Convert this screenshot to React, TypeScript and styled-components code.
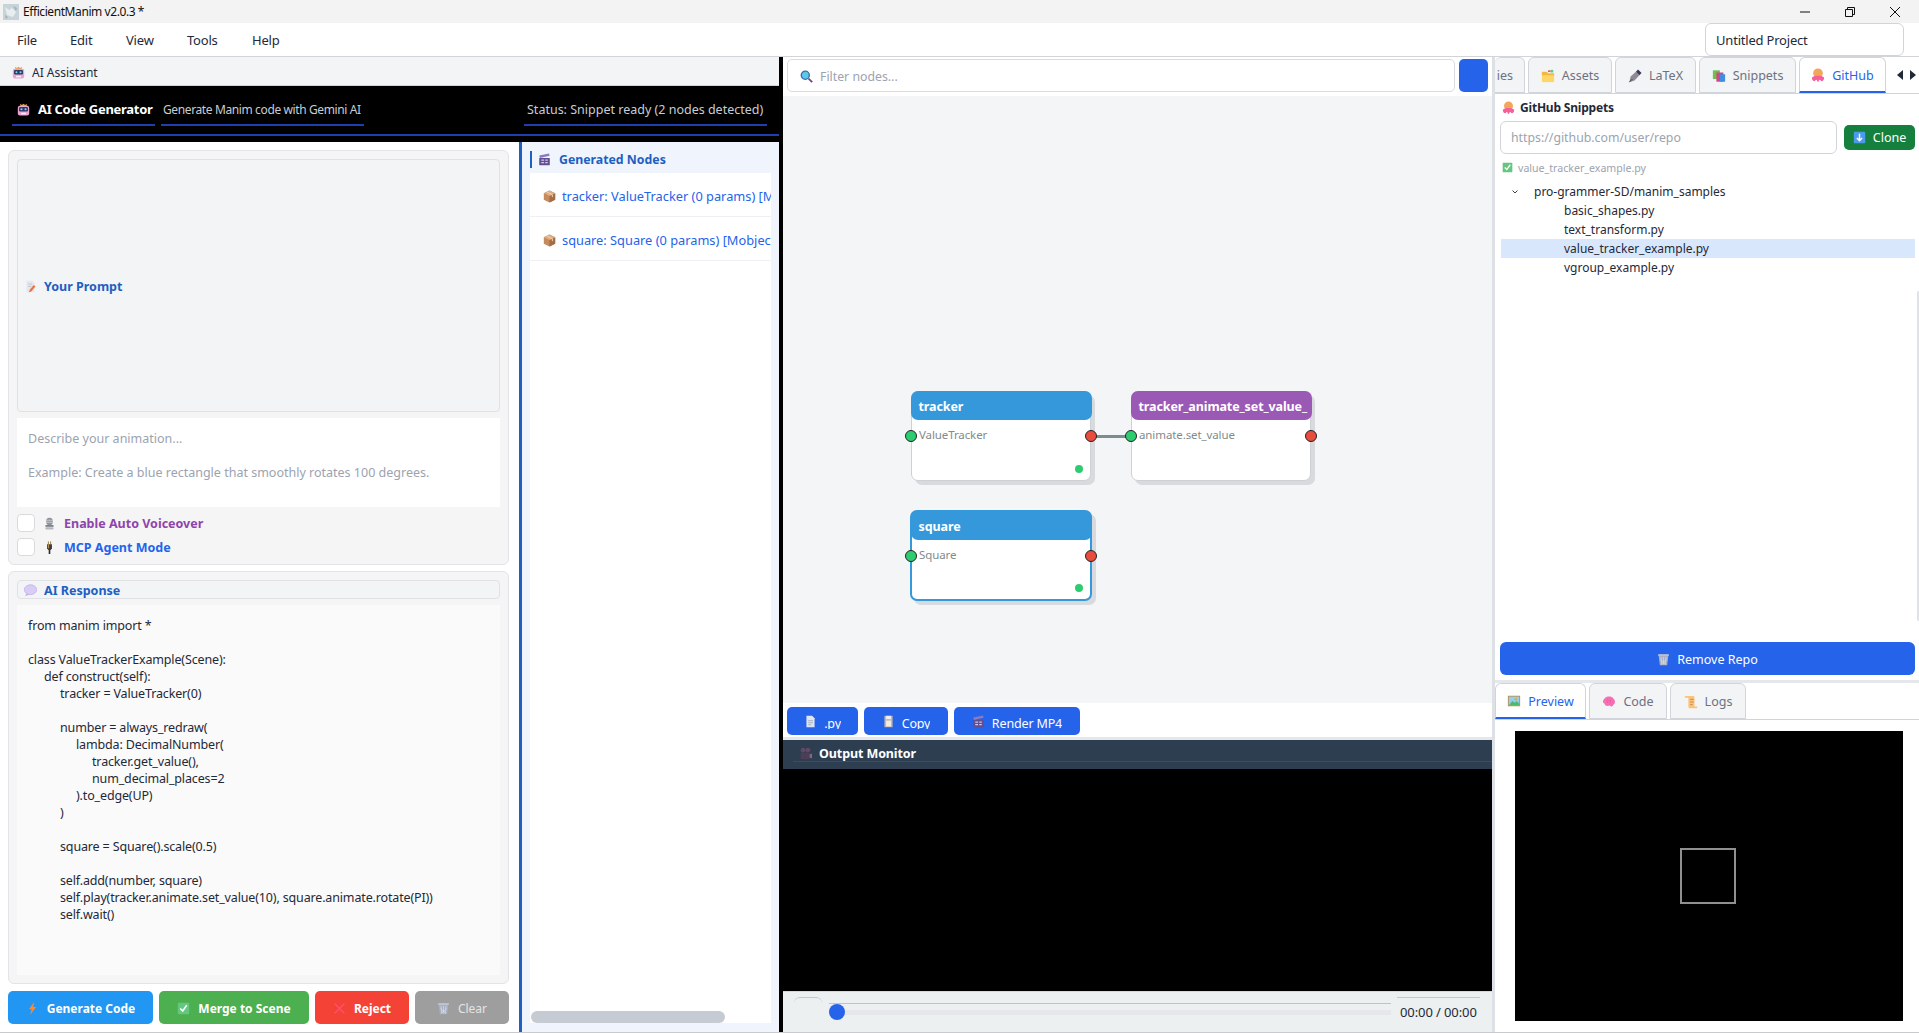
import React from "react";
import styled, { createGlobalStyle } from "styled-components";

const Global = createGlobalStyle`
  html, body { margin: 0; padding: 0; background: #fff; }
  body { font-family: "Noto Sans", "Open Sans", sans-serif; font-size: 12px; color: #1f2937; overflow: hidden; }
  * { box-sizing: border-box; }
`;

const Window = styled.div`
  width: 1919px;
  height: 1033px;
  display: flex;
  flex-direction: column;
  overflow: hidden;
  background: #fff;
  border-bottom: 1px solid #c8cacd;
`;

/* title + menu */
const TitleBar = styled.div`
  height: 23px;
  background: #f3f3f3;
  display: flex;
  align-items: center;
  padding-left: 3px;
  flex: none;
`;
const TitleText = styled.span`
  margin-left: 4px;
  font-size: 12px;
  letter-spacing: -0.42px;
  color: #111;
  flex: 1;
`;
const WinButtons = styled.div`
  display: flex;
  align-items: center;
  gap: 33px;
  padding-right: 18px;
`;
const MenuBar = styled.div`
  height: 34px;
  flex: none;
  display: flex;
  align-items: center;
  border-bottom: 1px solid #d1d5db;
  padding-left: 17px;
`;
const MenuItem = styled.span<{ $w: number }>`
  width: ${(p) => p.$w}px;
  font-size: 13px;
  letter-spacing: -0.2px;
  color: #1f2937;
`;
const ProjectInput = styled.div`
  margin-left: auto;
  margin-right: 15px;
  width: 199px;
  height: 33px;
  border: 1px solid #d1d5db;
  border-radius: 6px;
  display: flex;
  align-items: center;
  padding-left: 10px;
  font-size: 13px;
  letter-spacing: -0.2px;
`;

const Body = styled.div`
  flex: 1;
  display: flex;
  min-height: 0;
`;

/* left dock */
const LeftDock = styled.div`
  width: 779px;
  flex: none;
  display: flex;
  flex-direction: column;
`;
const DockTitle = styled.div`
  height: 29px;
  flex: none;
  background: #f3f4f6;
  border-bottom: 1px solid #d1d5db;
  display: flex;
  align-items: center;
  gap: 7px;
  padding: 2px 0 0 12px;
  font-size: 12px;
`;
const BlackHeader = styled.div`
  height: 56px;
  flex: none;
  background: #000;
  padding-bottom: 6px;
`;
const HeaderRow = styled.div`
  height: 50px;
  border-bottom: 2px solid #1e40af;
  padding: 8px 12px;
  display: flex;
  gap: 6px;
`;
const HeaderChip = styled.div<{ $push?: boolean; $bold?: boolean; $w: number }>`
  width: ${(p) => p.$w}px;
  height: 32px;
  border-bottom: 2px solid #1e40af;
  display: flex;
  align-items: center;
  gap: 8px;
  padding-left: ${(p) => (p.$bold ? 5 : 2)}px;
  margin-left: ${(p) => (p.$push ? "auto" : 0)};
  color: ${(p) => (p.$bold ? "#fff" : "#c9cdd3")};
  font-weight: ${(p) => (p.$bold ? 700 : 400)};
  font-size: ${(p) => (p.$bold ? 13 : 12)}px;
  letter-spacing: ${(p) => (p.$bold ? -0.3 : -0.38)}px;
  white-space: nowrap;
`;
const StatusChip = styled(HeaderChip)`
  font-size: 12.5px;
  letter-spacing: 0;
  padding-left: 3px;
`;
const DockBody = styled.div`
  flex: 1;
  display: flex;
  min-height: 0;
`;
const PromptColumn = styled.div`
  width: 519px;
  flex: none;
  padding: 8px 10px 9px 8px;
  display: flex;
  flex-direction: column;
`;
const Group = styled.div<{ $h: number; $mb: number }>`
  height: ${(p) => p.$h}px;
  margin-bottom: ${(p) => p.$mb}px;
  flex: none;
  background: #f5f5f5;
  border: 1px solid #e2e4e8;
  border-radius: 6px;
  padding: 8px;
  display: flex;
  flex-direction: column;
`;
const PromptLabel = styled.div`
  height: 253px;
  flex: none;
  background: #f3f4f6;
  border: 1px solid #dfe1e5;
  border-radius: 4px;
  display: flex;
  align-items: center;
  gap: 7px;
  padding: 1px 0 0 6px;
  color: #1d5fc2;
  font-weight: 700;
  font-size: 12.5px;
`;
const PromptArea = styled.div`
  height: 89px;
  flex: none;
  margin: 6px 0 1px;
  background: #fff;
  padding: 12px 11px;
  color: #9ca3af;
  font-size: 12.5px;
  line-height: 17px;
`;
const PromptGap = styled.div`
  height: 17px;
`;
const CheckRow = styled.div<{ $color: string }>`
  display: flex;
  align-items: center;
  height: 18px;
  margin-top: 6px;
  color: ${(p) => p.$color};
  font-weight: 700;
  font-size: 12.5px;
  gap: 8px;
`;
const CheckBox = styled.span`
  width: 18px;
  height: 18px;
  background: #fff;
  border: 1px solid #d8dade;
  border-radius: 4px;
  flex: none;
`;
const ResponseLabel = styled(PromptLabel)`
  height: 19px;
  padding-top: 1px;
`;
const CodeArea = styled.div`
  flex: 1;
  margin-top: 6px;
  background: #fafafa;
  padding: 12px 11px;
  font-size: 12.5px;
  letter-spacing: -0.15px;
  line-height: 17px;
  color: #1f2937;
  white-space: pre;
`;
const CodeLine = styled.div<{ $indent: number }>`
  height: 17px;
  padding-left: ${(p) => p.$indent * 16}px;
`;
const ButtonRow = styled.div`
  display: flex;
  gap: 6px;
  height: 33px;
  flex: none;
`;
const ActionButton = styled.div<{ $bg: string; $w: number; $plain?: boolean }>`
  width: ${(p) => p.$w}px;
  background: ${(p) => p.$bg};
  border-radius: 5px;
  color: ${(p) => (p.$plain ? "#e4e4e4" : "#fff")};
  font-weight: ${(p) => (p.$plain ? 400 : 700)};
  font-size: 12px;
  padding-top: 1px;
  display: flex;
  align-items: center;
  justify-content: center;
  gap: 8px;
`;

const NodesColumn = styled.div`
  flex: 1;
  min-width: 0;
  background: #eff4fd;
  border-left: 3px solid #1d5fc2;
  padding: 0 8px 9px;
  display: flex;
  flex-direction: column;
`;
const NodesTitle = styled.div`
  height: 31px;
  flex: none;
  display: flex;
  align-items: center;
  color: #1d5fc2;
  font-weight: 700;
  font-size: 12.3px;
  padding-top: 3px;
`;
const NodesBar = styled.span`
  width: 2px;
  height: 17px;
  background: #1d5fc2;
  margin-right: 6px;
`;
const NodesTitleText = styled.span`
  margin-left: 8px;
`;
const NodesList = styled.div`
  flex: 1;
  background: #fff;
  display: flex;
  flex-direction: column;
  min-height: 0;
  overflow: hidden;
`;
const NodeRow = styled.div`
  height: 44px;
  flex: none;
  display: flex;
  align-items: center;
  border-bottom: 1px solid #eef0f3;
  padding: 3px 0 0 13px;
  gap: 6px;
  color: #2563eb;
  font-size: 12.8px;
  white-space: nowrap;
  overflow: hidden;
`;
const HScroll = styled.div`
  margin-top: auto;
  margin-left: 1px;
  width: 194px;
  height: 12px;
  flex: none;
  border-radius: 6px;
  background: #c6cbd3;
`;

const VDivider = styled.div`
  width: 4px;
  flex: none;
  background: #000;
`;

/* centre */
const CenterColumn = styled.div`
  width: 709px;
  flex: none;
  display: flex;
  flex-direction: column;
`;
const FilterRow = styled.div`
  height: 39px;
  flex: none;
  display: flex;
  padding: 2px 4px 4px;
  gap: 4px;
`;
const FilterInput = styled.div`
  width: 668px;
  border: 1px solid #d9dbe1;
  border-radius: 5px;
  display: flex;
  align-items: center;
  gap: 7px;
  padding: 1px 0 0 12px;
  color: #9ca3af;
  font-size: 12.3px;
`;
const FilterButton = styled.div`
  width: 29px;
  background: #2563eb;
  border-radius: 5px;
`;
const Canvas = styled.div`
  height: 607px;
  flex: none;
  background: #f4f5f7;
  position: relative;
`;
const GraphNode = styled.div<{ $x: number; $y: number; $sel?: boolean }>`
  position: absolute;
  left: ${(p) => p.$x}px;
  top: ${(p) => p.$y}px;
  width: ${(p) => (p.$sel ? 182 : 180)}px;
  height: ${(p) => (p.$sel ? 91 : 90)}px;
  background: #fff;
  border: ${(p) => (p.$sel ? "2px solid #3498db" : "1.5px solid #cdd1d6")};
  border-radius: 7px;
  box-shadow: 4px 4px 0 #d9dadd;
`;
const NodeHead = styled.div<{ $bg: string }>`
  margin: -1.5px -1.5px 0;
  height: 29px;
  background: ${(p) => p.$bg};
  border-radius: 7px;
  color: #fff;
  font-weight: 700;
  font-size: 12.5px;
  letter-spacing: -0.1px;
  display: flex;
  align-items: center;
  padding: 2px 0 0 8px;
  white-space: nowrap;
  overflow: hidden;
`;
const NodeSub = styled.div`
  margin: 7px 0 0 7px;
  color: #7f8c8d;
  font-size: 11.5px;
  letter-spacing: -0.1px;
  line-height: 16px;
`;
const Socket = styled.span<{ $side: "left" | "right"; $c: string }>`
  position: absolute;
  top: 38px;
  ${(p) => p.$side}: -7px;
  width: 12px;
  height: 12px;
  border-radius: 50%;
  background: ${(p) => p.$c};
  border: 1px solid #222;
`;
const StatusDot = styled.span`
  position: absolute;
  right: 7px;
  bottom: 7px;
  width: 8px;
  height: 8px;
  border-radius: 50%;
  background: #2ecc71;
`;
const Edge = styled.div`
  position: absolute;
  left: 308px;
  top: 339px;
  width: 40px;
  height: 3px;
  background: #7f8c8d;
`;
const CanvasActions = styled.div`
  height: 34px;
  flex: none;
  display: flex;
  gap: 6px;
  padding: 4px 4px 2px;
`;
const SmallBlue = styled.div<{ $w: number }>`
  width: ${(p) => p.$w}px;
  height: 28px;
  background: #2563eb;
  border-radius: 5px;
  color: #fff;
  font-size: 12.5px;
  letter-spacing: -0.15px;
  display: flex;
  align-items: center;
  justify-content: center;
  gap: 7px;
  overflow: hidden;
`;
const ClippedLabel = styled.span`
  height: 13px;
  line-height: 15px;
  overflow: hidden;
  margin-top: 2px;
`;
const Sep = styled.div<{ $h: number }>`
  height: ${(p) => p.$h}px;
  flex: none;
  background: #e5e7eb;
`;
const MonitorBar = styled.div`
  height: 29px;
  flex: none;
  background: #2c3e50;
  padding: 0 0 0 10px;
  display: flex;
  align-items: flex-start;
`;
const MonitorInner = styled.div`
  flex: 1;
  height: 22px;
  border-bottom: 1px solid #3b4d60;
  display: flex;
  align-items: center;
  gap: 7px;
  padding: 5px 0 0 6px;
  color: #fff;
  font-weight: 700;
  font-size: 12.5px;
  letter-spacing: -0.1px;
`;
const MonitorScreen = styled.div`
  height: 222px;
  flex: none;
  background: #000;
`;
const PlayerBar = styled.div`
  flex: 1;
  background: #ecf0f1;
  border-top: 1px solid #d5d8db;
  display: flex;
  align-items: flex-start;
  padding: 5px 12px 0 11px;
`;
const GhostButton = styled.div`
  width: 28px;
  height: 20px;
  border-top: 1px solid #c4c8cc;
  border-radius: 6px 6px 0 0;
  margin-right: 7px;
  flex: none;
`;
const SliderBox = styled.div`
  width: 562px;
  height: 26px;
  flex: none;
  margin-top: 6px;
  border-top: 1px solid #bfc4c9;
  position: relative;
`;
const SliderGroove = styled.div`
  margin-top: 6px;
  height: 5px;
  background: #e5e7eb;
`;
const SliderHandle = styled.span`
  position: absolute;
  left: 0;
  top: 0;
  width: 16px;
  height: 16px;
  border-radius: 50%;
  background: #2563eb;
`;
const TimeBox = styled.div`
  margin-left: 6px;
  flex: 1;
  border-top: 1px solid #c4c8cc;
  padding: 5px 0 0 3px;
  font-size: 13px;
  letter-spacing: -0.1px;
  color: #1f2937;
  white-space: nowrap;
`;

/* right */
const RightColumn = styled.div`
  flex: 1;
  min-width: 0;
  display: flex;
  flex-direction: column;
  border-left: 3px solid #dde0e5;
`;
const TabBar = styled.div`
  height: 37px;
  flex: none;
  display: flex;
  gap: 3px;
  border-bottom: 1px solid #d1d5db;
`;
const Tab = styled.div<{ $w: number; $on?: boolean }>`
  width: ${(p) => p.$w}px;
  height: 36px;
  flex: none;
  background: ${(p) => (p.$on ? "#fff" : "#f3f4f6")};
  border: 1px solid #d1d5db;
  border-bottom: ${(p) => (p.$on ? "2px solid #2563eb" : "1px solid #d1d5db")};
  border-radius: 6px 6px 0 0;
  color: ${(p) => (p.$on ? "#2563eb" : "#6b7280")};
  font-size: 12.5px;
  padding-top: 1px;
  display: flex;
  align-items: center;
  justify-content: center;
  gap: 7px;
`;
const CutTab = styled(Tab)`
  justify-content: flex-end;
  padding-right: 11px;
  border-left: none;
`;
const TabArrows = styled.div`
  display: flex;
  align-items: center;
  gap: 7px;
  margin-left: 8px;
`;
const SnippetsPanel = styled.div`
  height: 586px;
  flex: none;
  display: flex;
  flex-direction: column;
  padding: 0 4px 5px 5px;
  position: relative;
`;
const SnippetsTitle = styled.div`
  height: 27px;
  flex: none;
  display: flex;
  align-items: center;
  gap: 5px;
  padding-left: 2px;
  font-weight: 700;
  font-size: 12px;
  letter-spacing: -0.2px;
  color: #1f2937;
`;
const CloneRow = styled.div`
  display: flex;
  align-items: center;
  gap: 7px;
  height: 33px;
  flex: none;
`;
const UrlInput = styled.div`
  width: 337px;
  height: 33px;
  border: 1px solid #d1d5db;
  border-radius: 6px;
  display: flex;
  align-items: center;
  padding-left: 10px;
  color: #9ca3af;
  font-size: 12.3px;
`;
const CloneButton = styled.div`
  width: 71px;
  height: 25px;
  background: #15803d;
  border-radius: 5px;
  color: #fff;
  font-size: 12.5px;
  display: flex;
  align-items: center;
  justify-content: center;
  gap: 7px;
`;
const StatusLine = styled.div`
  height: 27px;
  flex: none;
  display: flex;
  align-items: center;
  gap: 5px;
  padding-left: 2px;
  color: #9ca3af;
  font-size: 10.6px;
`;
const Tree = styled.div`
  margin-top: 1px;
  flex: 1;
`;
const TreeRow = styled.div<{ $indent: number; $on?: boolean }>`
  height: 19px;
  display: flex;
  align-items: center;
  padding-left: ${(p) => p.$indent}px;
  background: ${(p) => (p.$on ? "#d9e7fd" : "transparent")};
  font-size: 12px;
  color: #1f2937;
  margin-left: 1px;
`;
const Caret = styled.span`
  width: 33px;
  flex: none;
  padding-left: 11px;
  display: flex;
`;
const RemoveButton = styled.div`
  height: 33px;
  flex: none;
  background: #2563eb;
  border-radius: 6px;
  color: #fff;
  font-size: 12.5px;
  padding-top: 1px;
  display: flex;
  align-items: center;
  justify-content: center;
  gap: 7px;
`;
const ScrollEdge = styled.div`
  position: absolute;
  right: 0;
  top: 197px;
  width: 2px;
  height: 330px;
  background: #dfe2e6;
  border-radius: 2px 0 0 2px;
`;
const PreviewWrap = styled.div`
  flex: 1;
  padding: 11px 16px 11px 20px;
  display: flex;
  min-height: 0;
`;
const PreviewScreen = styled.div`
  flex: 1;
  background: #000;
  display: flex;
  align-items: center;
  justify-content: center;
`;
const ManimSquare = styled.div`
  width: 56px;
  height: 56px;
  border: 2px solid #909090;
  margin-left: -3px;
`;

type IconKind =
  | "robot" | "memo" | "mic" | "plug" | "balloon" | "clapper" | "box" | "bolt" | "check" | "cross"
  | "trash" | "folder" | "pen" | "books" | "octopus" | "down" | "picture" | "brain" | "scroll"
  | "page" | "floppy" | "camera" | "search";

const shapes: Record<IconKind, React.ReactNode> = {
  robot: (
    <>
      <path d="M4 4V1l2 1.500L8 .8l2 1.700L12 1v3z" fill="#e9a23b" />
      <rect x="1" y="3.500" width="14" height="12" rx="2.500" fill="#eaa3cf" />
      <rect x="2.500" y="5" width="11" height="5.500" rx="1.500" fill="#2b3a67" />
      <circle cx="5.500" cy="7.700" r="1.300" fill="#7fd4f5" />
      <circle cx="10.500" cy="7.700" r="1.300" fill="#7fd4f5" />
      <rect x="5" y="12" width="6" height="2" fill="#f5f0f7" />
    </>
  ),
  memo: (
    <>
      <path d="M3 1h7l3 3v11H3z" fill="#e6e8ef" />
      <path d="M5 5h5M5 8h4" stroke="#b9bec8" />
      <path d="M6 15l1-3 5-6 2 2-5 6z" fill="#f0723c" />
    </>
  ),
  mic: (
    <>
      <rect x="4" y="1" width="8" height="9" rx="4" fill="#8d939c" />
      <path d="M4 4h8M4 6.500h8" stroke="#d5d8dc" />
      <rect x="3" y="10" width="10" height="2" fill="#6f747c" />
      <rect x="3" y="12.500" width="10" height="3" rx="1" fill="#b5b9bf" />
    </>
  ),
  plug: (
    <>
      <rect x="6" y="0.500" width="1.300" height="3.500" fill="#9a8a5a" />
      <rect x="8.700" y="0.500" width="1.300" height="3.500" fill="#9a8a5a" />
      <path d="M5 4h6v5l-1.500 2h-3L5 9z" fill="#3b3b44" />
      <path d="M6 4h1.500v5H6z" fill="#c58a3a" />
      <rect x="7" y="11" width="2" height="5" fill="#2c2c34" />
    </>
  ),
  balloon: (
    <>
      <ellipse cx="8" cy="7" rx="7.500" ry="6" fill="#d9cdf5" stroke="#c0b0ec" />
      <path d="M3 11l-1.500 4L7 13z" fill="#c6b6ee" />
    </>
  ),
  clapper: (
    <>
      <rect x="1.500" y="6" width="13" height="9" rx=".5" fill="#5f4f92" />
      <path d="M1.500 3l12-2.500.8 3-12 2.500z" fill="#8a7abf" />
      <path d="M4 8h3.500v1.500H4zM9 8h3v1.500H9zM4 11h3.500v1.500H4zM9 11h3v1.500H9z" fill="#cfc8e6" />
    </>
  ),
  box: (
    <>
      <path d="M8 .5l7 3.500v8l-7 3.500L1 12V4z" fill="#c58a5e" />
      <path d="M8 7.500L15 4v8l-7 3.500z" fill="#a36d45" />
      <path d="M1 4l7 3.500L15 4 8 .5z" fill="#dfab7f" />
      <path d="M4.500 2.300l7 3.500v3" stroke="#ecd6bc" strokeWidth="1.200" fill="none" />
    </>
  ),
  bolt: <path d="M10 0L3.500 9H7l-2 7 7.500-10H9z" fill="#f68a3c" />,
  check: (
    <>
      <rect x="1" y="1" width="14" height="14" rx="1" fill="#63c77f" />
      <path d="M4 8l3 3 5-7" stroke="#fff" strokeWidth="2" fill="none" />
    </>
  ),
  cross: <path d="M2 2l12 12M14 2L2 14" stroke="#ff4f86" strokeWidth="1.600" />,
  trash: (
    <>
      <path d="M2 3h12l-1.500 12h-9z" fill="#a9b0c4" />
      <rect x="1.500" y="1.500" width="13" height="2" fill="#c5cada" />
      <path d="M5 5l1 9M8 5v9M11 5l-1 9M4 8l7 6M12 8l-7 6" stroke="#e1e4ec" strokeWidth=".7" />
    </>
  ),
  folder: (
    <>
      <path d="M1 5h14v10H1z" fill="#fcd667" />
      <path d="M1 3h6l1 2h7v2H1z" fill="#f3b73f" />
      <rect x="8" y="1.500" width="3" height="2" fill="#e8604c" />
      <rect x="11" y="1" width="3" height="3" fill="#5cc98d" />
    </>
  ),
  pen: (
    <>
      <path d="M1.500 15l1.500-6.500L9 3l4 4-5.500 6z" fill="#8d8a93" />
      <path d="M9 3l2.500-2.500 4 4L13 7z" fill="#3a3b58" />
      <path d="M1.500 15l3.500-3.500" stroke="#3a3b58" />
    </>
  ),
  books: (
    <>
      <rect x="1" y="1.500" width="8" height="10" fill="#6cc24a" />
      <rect x="5" y="4" width="8" height="10.500" fill="#d3458a" />
      <rect x="9" y="6" width="6" height="8.500" fill="#3f8fe0" />
    </>
  ),
  octopus: (
    <>
      <circle cx="8" cy="6" r="5.500" fill="#f2a65a" />
      <path d="M1 11c2-3 12-3 14 0 0 2.500-1.500 4-3 4-1 0-1-1.500-2-1.500S9 16 8 16s-1-2.500-2-2.500S5 15 4 15c-1.500 0-3-1.500-3-4z" fill="#f65f9a" />
    </>
  ),
  down: (
    <>
      <rect x="1" y="1" width="14" height="14" rx="1" fill="#4a9bec" />
      <path d="M8 3.500v8M4.800 8.500L8 12l3.200-3.500" stroke="#fff" strokeWidth="1.800" fill="none" />
    </>
  ),
  picture: (
    <>
      <rect x="1" y="2" width="14" height="12" fill="#c28a52" />
      <rect x="2" y="3" width="12" height="10" fill="#8fd2ec" />
      <path d="M2 13l4-5 3 2 2-2 3 3v2z" fill="#4fb86a" />
      <circle cx="10" cy="6" r="1.500" fill="#f8a03a" />
    </>
  ),
  brain: (
    <>
      <path d="M3 4c2-3 8-3 10 0 2.500 2 2.500 6 0 7-1 2.500-3 2.500-4 1-2 1-6 .5-6-2-2.500-1-2.500-4 0-6z" fill="#f56fb2" />
      <path d="M6 5c1 1 1 3 0 4M10 5c-1 1-1 3 0 4" stroke="#e35aa0" fill="none" />
    </>
  ),
  scroll: (
    <>
      <path d="M1 1h10l1 1v11h3v2H6l-1-1V3H1z" fill="#fbc27a" />
      <path d="M7 5h4M7 8h4M7 11h3" stroke="#c8854a" />
    </>
  ),
  page: (
    <>
      <path d="M3 1h7l3 3v11H3z" fill="#dfe5f0" />
      <path d="M5 7h6M5 9.500h6M5 12h4" stroke="#9fa9bc" />
    </>
  ),
  floppy: (
    <>
      <rect x="3" y="1" width="10" height="14" fill="#c8b9a8" />
      <rect x="5" y="1" width="6" height="4" fill="#eee" />
      <rect x="5" y="7" width="6" height="7" fill="#f2ece4" />
    </>
  ),
  camera: (
    <>
      <circle cx="5" cy="4" r="3" fill="#5e4a66" />
      <circle cx="11" cy="4" r="3" fill="#5e4a66" />
      <rect x="2" y="7" width="11" height="8" fill="#4d3d55" />
      <path d="M13 9l3-1v6l-3-1z" fill="#7e6a86" />
    </>
  ),
  search: (
    <>
      <circle cx="6.500" cy="6.500" r="5" fill="#5cc8ea" stroke="#3c6aa0" strokeWidth="1.600" />
      <path d="M10.500 10.500l4.500 4.500" stroke="#7a3f8f" strokeWidth="2.200" />
    </>
  ),
};

const IconSvg = styled.svg`
  flex: none;
  display: block;
`;

const Icon = ({ kind, size = 13 }: { kind: IconKind; size?: number }) => (
  <IconSvg width={size} height={size} viewBox="0 0 16 16">
    {shapes[kind]}
  </IconSvg>
);

const code: [number, string][] = [
  [0, "from manim import *"],
  [0, ""],
  [0, "class ValueTrackerExample(Scene):"],
  [1, "def construct(self):"],
  [2, "tracker = ValueTracker(0)"],
  [0, ""],
  [2, "number = always_redraw("],
  [3, "lambda: DecimalNumber("],
  [4, "tracker.get_value(),"],
  [4, "num_decimal_places=2"],
  [3, ").to_edge(UP)"],
  [2, ")"],
  [0, ""],
  [2, "square = Square().scale(0.5)"],
  [0, ""],
  [2, "self.add(number, square)"],
  [2, "self.play(tracker.animate.set_value(10), square.animate.rotate(PI))"],
  [2, "self.wait()"],
];

const menus: [string, number][] = [
  ["File", 53],
  ["Edit", 56],
  ["View", 61],
  ["Tools", 65],
  ["Help", 50],
];

const App = () => (
  <Window>
    <Global />
    <TitleBar>
      <svg width="16" height="16" viewBox="0 0 16 16">
        <rect width="16" height="16" fill="#c7d3d8" />
        <path d="M2 3l4 3 3-2 4 4-3 5-6-2z" fill="#e8eef0" />
        <path d="M10 2l4 2-1 3zM2 11l3 2-2 2z" fill="#9fb2ba" />
      </svg>
      <TitleText>EfficientManim v2.0.3 *</TitleText>
      <WinButtons>
        <svg width="12" height="12" viewBox="0 0 12 12">
          <path d="M1 6h10" stroke="#111" />
        </svg>
        <svg width="12" height="12" viewBox="0 0 12 12">
          <path d="M1.500 3.500h7v7h-7zM3.500 3.500v-2h7v7h-2" stroke="#111" fill="none" />
        </svg>
        <svg width="12" height="12" viewBox="0 0 12 12">
          <path d="M1 1l10 10M11 1L1 11" stroke="#111" />
        </svg>
      </WinButtons>
    </TitleBar>
    <MenuBar>
      {menus.map(([m, w]) => (
        <MenuItem key={m} $w={w}>
          {m}
        </MenuItem>
      ))}
      <ProjectInput>Untitled Project</ProjectInput>
    </MenuBar>
    <Body>
      <LeftDock>
        <DockTitle>
          <Icon kind="robot" />
          AI Assistant
        </DockTitle>
        <BlackHeader>
          <HeaderRow>
            <HeaderChip $bold $w={143}>
              <Icon kind="robot" />
              AI Code Generator
            </HeaderChip>
            <HeaderChip $w={203}>Generate Manim code with Gemini AI</HeaderChip>
            <StatusChip $push $w={243}>Status: Snippet ready (2 nodes detected)</StatusChip>
          </HeaderRow>
        </BlackHeader>
        <DockBody>
          <PromptColumn>
            <Group $h={415} $mb={6}>
              <PromptLabel>
                <Icon kind="memo" />
                Your Prompt
              </PromptLabel>
              <PromptArea>
                Describe your animation...
                <PromptGap />
                Example: Create a blue rectangle that smoothly rotates 100 degrees.
              </PromptArea>
              <CheckRow $color="#8e44ad">
                <CheckBox />
                <Icon kind="mic" />
                Enable Auto Voiceover
              </CheckRow>
              <CheckRow $color="#2563eb">
                <CheckBox />
                <Icon kind="plug" />
                MCP Agent Mode
              </CheckRow>
            </Group>
            <Group $h={413} $mb={7}>
              <ResponseLabel>
                <Icon kind="balloon" />
                AI Response
              </ResponseLabel>
              <CodeArea>
                {code.map(([indent, text], i) => (
                  <CodeLine key={i} $indent={indent}>
                    {text}
                  </CodeLine>
                ))}
              </CodeArea>
            </Group>
            <ButtonRow>
              <ActionButton $bg="#2196f3" $w={145}>
                <Icon kind="bolt" />
                Generate Code
              </ActionButton>
              <ActionButton $bg="#4caf50" $w={150}>
                <Icon kind="check" />
                Merge to Scene
              </ActionButton>
              <ActionButton $bg="#f44336" $w={94}>
                <Icon kind="cross" />
                Reject
              </ActionButton>
              <ActionButton $bg="#9e9e9e" $w={94} $plain>
                <Icon kind="trash" />
                Clear
              </ActionButton>
            </ButtonRow>
          </PromptColumn>
          <NodesColumn>
            <NodesTitle>
              <NodesBar />
              <Icon kind="clapper" />
              <NodesTitleText>Generated Nodes</NodesTitleText>
            </NodesTitle>
            <NodesList>
              <NodeRow>
                <Icon kind="box" />
                tracker: ValueTracker (0 params) [Mobject]
              </NodeRow>
              <NodeRow>
                <Icon kind="box" />
                square: Square (0 params) [Mobject]
              </NodeRow>
              <HScroll />
            </NodesList>
          </NodesColumn>
        </DockBody>
      </LeftDock>
      <VDivider />
      <CenterColumn>
        <FilterRow>
          <FilterInput>
            <Icon kind="search" />
            Filter nodes...
          </FilterInput>
          <FilterButton />
        </FilterRow>
        <Canvas>
          <Edge />
          <GraphNode $x={128} $y={295}>
            <NodeHead $bg="#3498db">tracker</NodeHead>
            <NodeSub>ValueTracker</NodeSub>
            <Socket $side="left" $c="#2ecc71" />
            <Socket $side="right" $c="#e74c3c" />
            <StatusDot />
          </GraphNode>
          <GraphNode $x={348} $y={295}>
            <NodeHead $bg="#9b59b6">tracker_animate_set_value_</NodeHead>
            <NodeSub>animate.set_value</NodeSub>
            <Socket $side="left" $c="#2ecc71" />
            <Socket $side="right" $c="#e74c3c" />
          </GraphNode>
          <GraphNode $x={127} $y={414} $sel>
            <NodeHead $bg="#3498db">square</NodeHead>
            <NodeSub>Square</NodeSub>
            <Socket $side="left" $c="#2ecc71" />
            <Socket $side="right" $c="#e74c3c" />
            <StatusDot />
          </GraphNode>
        </Canvas>
        <CanvasActions>
          <SmallBlue $w={71}>
            <Icon kind="page" />
            <ClippedLabel>.py</ClippedLabel>
          </SmallBlue>
          <SmallBlue $w={84}>
            <Icon kind="floppy" />
            <ClippedLabel>Copy</ClippedLabel>
          </SmallBlue>
          <SmallBlue $w={126}>
            <Icon kind="clapper" />
            <ClippedLabel>Render MP4</ClippedLabel>
          </SmallBlue>
        </CanvasActions>
        <Sep $h={3} />
        <MonitorBar>
          <MonitorInner>
            <Icon kind="camera" />
            Output Monitor
          </MonitorInner>
        </MonitorBar>
        <MonitorScreen />
        <PlayerBar>
          <GhostButton />
          <SliderBox>
            <SliderGroove />
            <SliderHandle />
          </SliderBox>
          <TimeBox>00:00 / 00:00</TimeBox>
        </PlayerBar>
      </CenterColumn>
      <RightColumn>
        <TabBar>
          <CutTab $w={30}>ies</CutTab>
          <Tab $w={84}>
            <Icon kind="folder" size={14} />
            Assets
          </Tab>
          <Tab $w={81}>
            <Icon kind="pen" size={14} />
            LaTeX
          </Tab>
          <Tab $w={97}>
            <Icon kind="books" size={14} />
            Snippets
          </Tab>
          <Tab $w={87} $on>
            <Icon kind="octopus" size={14} />
            GitHub
          </Tab>
          <TabArrows>
            <svg width="6" height="10" viewBox="0 0 6 10">
              <path d="M6 0v10L0 5z" fill="#1f2937" />
            </svg>
            <svg width="6" height="10" viewBox="0 0 6 10">
              <path d="M0 0v10l6-5z" fill="#1f2937" />
            </svg>
          </TabArrows>
        </TabBar>
        <SnippetsPanel>
          <SnippetsTitle>
            <Icon kind="octopus" />
            GitHub Snippets
          </SnippetsTitle>
          <CloneRow>
            <UrlInput>https://github.com/user/repo</UrlInput>
            <CloneButton>
              <Icon kind="down" />
              Clone
            </CloneButton>
          </CloneRow>
          <StatusLine>
            <Icon kind="check" size={11} />
            value_tracker_example.py
          </StatusLine>
          <Tree>
            <TreeRow $indent={0}>
              <Caret>
                <svg width="6" height="4" viewBox="0 0 6 4">
                  <path d="M.5.5L3 3 5.500.5" stroke="#374151" fill="none" />
                </svg>
              </Caret>
              pro-grammer-SD/manim_samples
            </TreeRow>
            <TreeRow $indent={63}>basic_shapes.py</TreeRow>
            <TreeRow $indent={63}>text_transform.py</TreeRow>
            <TreeRow $indent={63} $on>value_tracker_example.py</TreeRow>
            <TreeRow $indent={63}>vgroup_example.py</TreeRow>
          </Tree>
          <RemoveButton>
            <Icon kind="trash" />
            Remove Repo
          </RemoveButton>
          <ScrollEdge />
        </SnippetsPanel>
        <Sep $h={3} />
        <TabBar>
          <Tab $w={91} $on>
            <Icon kind="picture" size={14} />
            Preview
          </Tab>
          <Tab $w={78}>
            <Icon kind="brain" size={14} />
            Code
          </Tab>
          <Tab $w={76}>
            <Icon kind="scroll" size={14} />
            Logs
          </Tab>
        </TabBar>
        <PreviewWrap>
          <PreviewScreen>
            <ManimSquare />
          </PreviewScreen>
        </PreviewWrap>
      </RightColumn>
    </Body>
  </Window>
);

export default App;
